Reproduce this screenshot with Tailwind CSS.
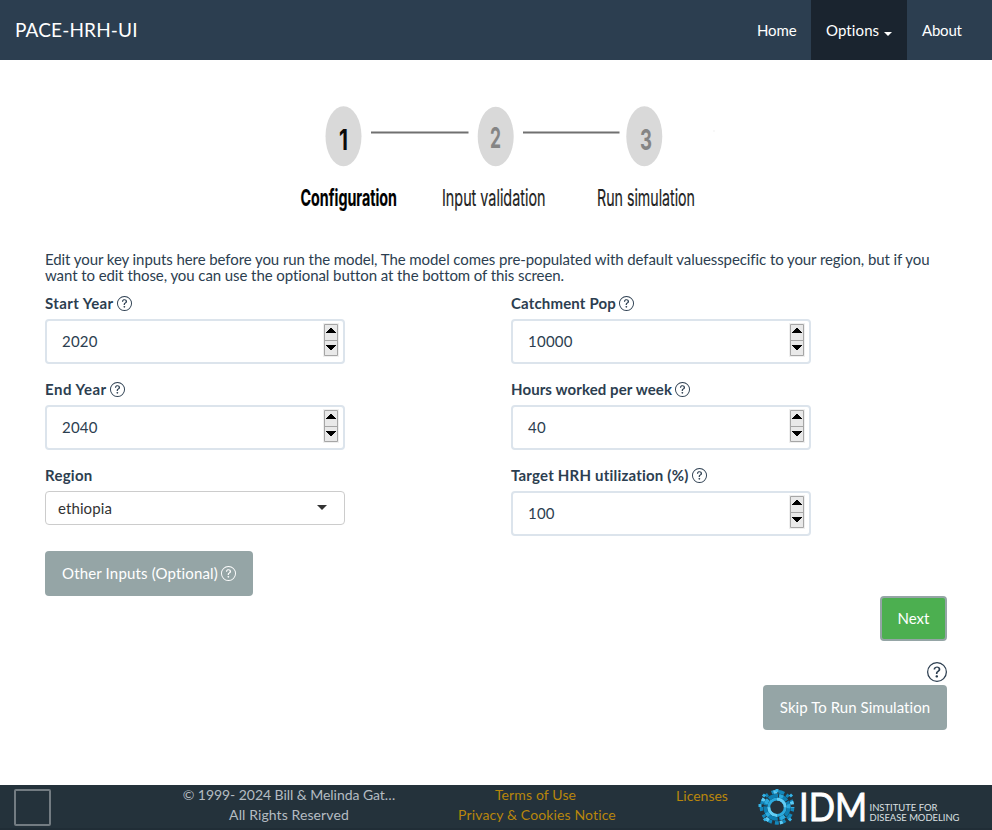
<!DOCTYPE html>
<html lang="en">
<head>
<meta charset="utf-8">
<title>PACE-HRH-UI</title>
<script src="https://cdn.jsdelivr.net/npm/@tailwindcss/browser@4"></script>
</head>
<body class="h-[830px] flex flex-col overflow-hidden bg-white font-['Lato',sans-serif] text-[15px] leading-[21px] text-[#2c3e50]">
<svg class="hidden">
  <symbol id="help" viewBox="0 0 16 16">
    <path fill="currentColor" d="M8 15A7 7 0 1 1 8 1a7 7 0 0 1 0 14zm0 1A8 8 0 1 0 8 0a8 8 0 0 0 0 16z"/>
    <path fill="currentColor" d="M5.255 5.786a.237.237 0 0 0 .241.247h.825c.138 0 .248-.113.266-.25.09-.656.54-1.134 1.342-1.134.686 0 1.314.343 1.314 1.168 0 .635-.374.927-.965 1.371-.673.489-1.206 1.06-1.168 1.987l.003.217a.25.25 0 0 0 .25.246h.811a.25.25 0 0 0 .25-.25v-.105c0-.718.273-.927 1.01-1.486.609-.463 1.244-.977 1.244-2.056 0-1.511-1.276-2.241-2.673-2.241-1.267 0-2.655.59-2.75 2.286zm1.557 5.763c0 .533.425.927 1.01.927.609 0 1.028-.394 1.028-.927 0-.552-.42-.94-1.029-.94-.584 0-1.009.388-1.009.94z"/>
  </symbol>
  <symbol id="spin" viewBox="0 0 16 34">
    <rect width="16" height="34" fill="#efefef"/>
    <path d="M1.500 1.500h13v31h-13zM1.500 17.500h13" fill="#e9e9e9" stroke="#a6a6a6"/>
    <path d="M7 5h2v1h1v1h1v1h1v1h1v1H3V9h1V8h1V7h1V6h1zM3 22h10v1h-1v1h-1v1h-1v1H9v1H7v-1H6v-1H5v-1H4v-1H3z" fill="#000" shape-rendering="crispEdges"/>
  </symbol>
</svg>

<nav class="h-[60px] shrink-0 bg-[#2c3e50] flex items-center justify-between px-[15px] text-white">
  <a class="text-[19px] pb-px tracking-[0.15px]">PACE-HRH-UI</a>
  <div class="flex h-full">
    <a class="h-full w-[69px] pl-[15px] flex items-center pt-px tracking-[-0.1px]">Home</a>
    <a class="h-full w-[96px] pl-[15px] flex items-center bg-[#1a242f] pt-px tracking-[0.1px]">Options<span class="ml-[5px] mt-[6px] border-x-4 border-t-4 border-x-transparent border-t-white"></span></a>
    <a class="h-full w-[70px] pl-[15px] flex items-center pt-px tracking-[-0.2px]">About</a>
  </div>
</nav>

<main class="flex-1 px-[45px] flex flex-col">
  <svg class="w-[450px] h-[190px] self-center shrink-0" viewBox="271 60 450 190" font-family="Inter, sans-serif">
    <g fill="#d9d9d9"><ellipse cx="343.5" cy="136.2" rx="18" ry="30"/><ellipse cx="495.7" cy="136.5" rx="18" ry="29.7"/><ellipse cx="644.3" cy="136.3" rx="18" ry="30"/></g>
    <path d="M371 132.500h97.500M523 132.500h96.500" stroke="#707070" stroke-width="2"/>
    <g font-weight="700" font-size="29">
      <text x="339" y="149.500" textLength="9" lengthAdjust="spacingAndGlyphs" fill="#0a0a0a">1</text>
      <text x="490" y="148" textLength="11" lengthAdjust="spacingAndGlyphs" fill="#858585">2</text>
      <text x="640" y="149.500" textLength="12" lengthAdjust="spacingAndGlyphs" fill="#858585">3</text>
    </g>
    <g font-size="23" fill="#222" stroke="#222" stroke-width=".2">
      <text x="300.500" y="205.500" textLength="96.500" lengthAdjust="spacingAndGlyphs" font-weight="700" fill="#000">Configuration</text>
      <text x="442" y="205.500" textLength="103.500" lengthAdjust="spacingAndGlyphs">Input validation</text>
      <text x="597" y="205.500" textLength="98" lengthAdjust="spacingAndGlyphs">Run simulation</text>
    </g>
    <path d="M713 131h2" stroke="#f1f1f1"/>
  </svg>
  <p class="mt-[1px] mb-[10px] leading-[16px] tracking-[-0.08px]">Edit your key inputs here before you run the model, The model comes pre-populated with default valuesspecific to your region, but if you want to edit those, you can use the optional button at the bottom of this screen.</p>

  <div class="flex gap-[166px]">
    <section class="w-[300px]">
      <div class="mb-[15px]">
        <label class="flex items-center gap-[3px] font-bold mb-[5px] tracking-[0.4px]">Start Year<svg class="size-[15px]"><use href="#help"/></svg></label>
        <div class="h-[45px] border-2 border-[#dce4ec] rounded-[4px] flex justify-between pl-[15px] pr-[4px] pt-[2px]"><span class="leading-[37px] tracking-[0.2px]">2020</span><svg class="w-4 h-[34px]"><use href="#spin"/></svg></div>
      </div>
      <div class="mb-[15px]">
        <label class="flex items-center gap-[3px] font-bold mb-[5px] tracking-[0.5px]">End Year<svg class="size-[15px]"><use href="#help"/></svg></label>
        <div class="h-[45px] border-2 border-[#dce4ec] rounded-[4px] flex justify-between pl-[15px] pr-[4px] pt-[2px]"><span class="leading-[37px] tracking-[0.2px]">2040</span><svg class="w-4 h-[34px]"><use href="#spin"/></svg></div>
      </div>
      <label class="block font-bold mb-[5px] tracking-[0.25px]">Region</label>
      <div class="h-[34px] border border-[#ccc] rounded-[4px] flex items-center justify-between pl-3 pr-[17px] text-[#333]"><span class="pt-px tracking-[0.1px]">ethiopia</span><span class="border-x-5 border-t-5 border-x-transparent border-t-[#333] mb-[2px]"></span></div>
      <button class="mt-[26px] h-[45px] w-[208px] rounded-[4px] bg-[#95a5a6] text-white flex items-center justify-center gap-[3px] tracking-[0.16px]">Other Inputs (Optional)<svg class="size-[15px]"><use href="#help"/></svg></button>
    </section>
    <section class="w-[300px]">
      <div class="mb-[15px]">
        <label class="flex items-center gap-[3px] font-bold mb-[5px] tracking-[0.16px]">Catchment Pop<svg class="size-[15px]"><use href="#help"/></svg></label>
        <div class="h-[45px] border-2 border-[#dce4ec] rounded-[4px] flex justify-between pl-[15px] pr-[4px] pt-[2px]"><span class="leading-[37px] tracking-[0.25px]">10000</span><svg class="w-4 h-[34px]"><use href="#spin"/></svg></div>
      </div>
      <div class="mb-[15px]">
        <label class="flex items-center gap-[3px] font-bold mb-[5px] tracking-[0.1px]">Hours worked per week<svg class="size-[15px]"><use href="#help"/></svg></label>
        <div class="h-[45px] border-2 border-[#dce4ec] rounded-[4px] flex justify-between pl-[15px] pr-[4px] pt-[2px]"><span class="leading-[37px] tracking-[0.2px]">40</span><svg class="w-4 h-[34px]"><use href="#spin"/></svg></div>
      </div>
      <div>
        <label class="flex items-center gap-[4px] font-bold mb-[5px] tracking-[0.2px]">Target HRH utilization (%)<svg class="size-[15px]"><use href="#help"/></svg></label>
        <div class="h-[45px] border-2 border-[#dce4ec] rounded-[4px] flex justify-between pl-[15px] pr-[4px] pt-[2px]"><span class="leading-[37px] tracking-[0.2px]">100</span><svg class="w-4 h-[34px]"><use href="#spin"/></svg></div>
      </div>
    </section>
  </div>

  <div class="flex flex-col items-end">
    <button class="h-[45px] w-[67px] rounded-[4px] border-2 border-[#95a5a6] bg-[#4caf50] text-white">Next</button>
    <svg class="size-5 mt-[21px] mb-[3px]"><use href="#help"/></svg>
    <button class="h-[45px] w-[184px] rounded-[4px] bg-[#95a5a6] text-white tracking-[0.05px]">Skip To Run Simulation</button>
  </div>
</main>

<footer class="h-[45px] shrink-0 bg-[#24323b] border-b-2 border-[#202d36] flex items-start text-[14px] leading-5 text-[#b4bcc2] text-center">
  <div class="ml-[14px] mt-[4px] size-[37px] shrink-0 border-2 rounded-[2px] border-[#737c82]"></div>
  <div class="ml-[118px] w-[240px] tracking-[-0.05px]">© 1999- 2024 Bill &amp; Melinda Gat…<br><span class="tracking-[0.1px]">All Rights Reserved</span></div>
  <div class="ml-[27px] w-[200px] text-[#b8860b] tracking-[0.13px]"><span class="block pr-px">Terms of Use</span><span class="block pl-[2px]">Privacy &amp; Cookies Notice</span></div>
  <div class="ml-[25px] w-[82px] text-[#b8860b] pt-px">Licenses</div>
  <svg class="ml-[15px] mt-[3px] w-[204px] h-[40px] shrink-0" viewBox="757.5 788 204 40">
    <g fill="none">
      <circle cx="776.500" cy="807.300" r="8.300" stroke="#2ba9dc" stroke-width="3"/>
      <path d="M776.500 799a8.300 8.300 0 0 1 8.300 8.300M776.500 815.600a8.300 8.300 0 0 1-8.300-8.300" stroke="#62cef5" stroke-width="3"/>
      <circle cx="776.500" cy="807.300" r="11.700" stroke="#0e7fb2" stroke-width="3.700" stroke-dasharray="9 1 6 1.500 10 1"/>
      <circle cx="776.500" cy="807.300" r="11.700" stroke="#2aaade" stroke-width="3.700" stroke-dasharray="4 9 5 12" stroke-dashoffset="3"/>
      <circle cx="776.500" cy="807.300" r="15.600" stroke="#1287bb" stroke-width="3.500" stroke-dasharray="4 3 6 2.500 3 4"/>
      <circle cx="776.500" cy="807.300" r="15.600" stroke="#5ccbf5" stroke-width="3.500" stroke-dasharray="3 11.500 4 18" stroke-dashoffset="18"/>
      <path d="M775 790.500h3M762.500 796.500l2-2M789.500 794.500l2 2M759.500 807v-3M763.500 818.500l2 2M788.500 820.500l2-2" stroke="#35b5e8" stroke-width="3"/>
    </g>
    <g fill="#fff" font-family="Lato, sans-serif">
      <text x="798.500" y="821" font-size="38" textLength="68" lengthAdjust="spacingAndGlyphs" stroke="#fff" stroke-width=".9">IDM</text>
      <text x="869" y="811.300" font-size="8.900" textLength="68" lengthAdjust="spacingAndGlyphs" fill="#dce0e2">INSTITUTE FOR</text>
      <text x="869" y="820.600" font-size="8.900" textLength="90" lengthAdjust="spacingAndGlyphs" fill="#dce0e2">DISEASE MODELING</text>
    </g>
  </svg>
</footer>
</body>
</html>
